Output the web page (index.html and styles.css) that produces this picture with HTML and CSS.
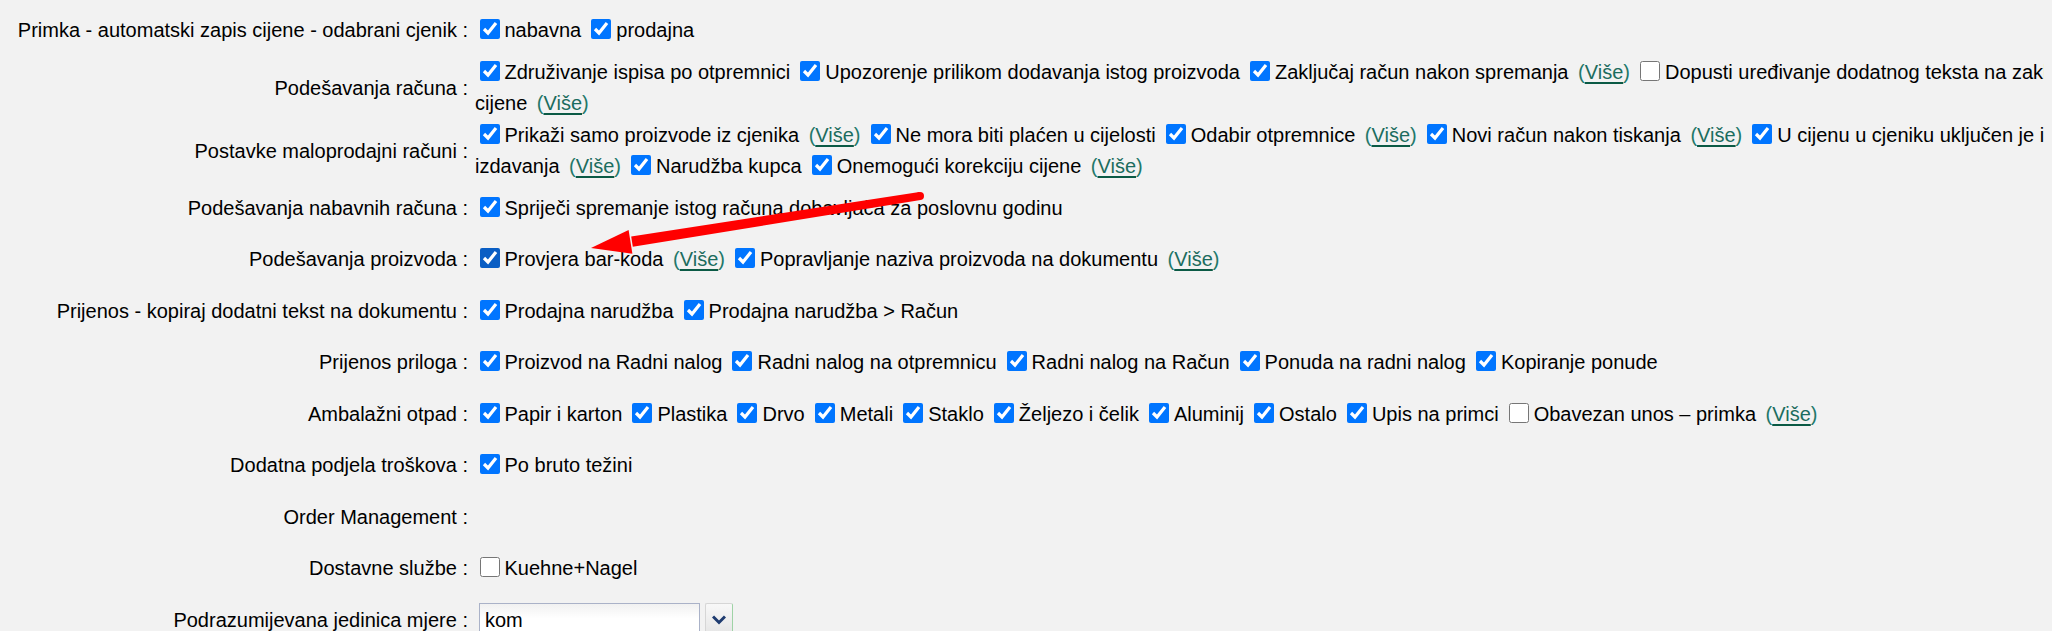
FILE: index.html
```html
<!DOCTYPE html>
<html lang="hr">
<head>
<meta charset="utf-8">
<title>Postavke</title>
<link rel="stylesheet" href="styles.css">
</head>
<body>
<table class="settings">
  <colgroup>
    <col class="c-lbl">
    <col class="c-val">
  </colgroup>
  <tr>
    <td class="lbl">Primka - automatski zapis cijene - odabrani cjenik :</td>
    <td class="val"><input type="checkbox" checked>nabavna <input type="checkbox" checked>prodajna</td>
  </tr>
  <tr>
    <td class="lbl">Podešavanja računa :</td>
    <td class="val"><input type="checkbox" checked>Združivanje ispisa po otpremnici <input type="checkbox" checked>Upozorenje prilikom dodavanja istog proizvoda <input type="checkbox" checked>Zaključaj račun nakon spremanja <span class="more">(<a href="#">Više</a>)</span> <input type="checkbox">Dopusti uređivanje dodatnog teksta na zaključanom računu <input type="checkbox">Upozorenje kod promjene<br>cijene <span class="more">(<a href="#">Više</a>)</span></td>
  </tr>
  <tr>
    <td class="lbl">Postavke maloprodajni računi :</td>
    <td class="val"><input type="checkbox" checked>Prikaži samo proizvode iz cjenika <span class="more">(<a href="#">Više</a>)</span> <input type="checkbox" checked>Ne mora biti plaćen u cijelosti <input type="checkbox" checked>Odabir otpremnice <span class="more">(<a href="#">Više</a>)</span> <input type="checkbox" checked>Novi račun nakon tiskanja <span class="more">(<a href="#">Više</a>)</span> <input type="checkbox" checked>U cijenu u cjeniku uključen je i porez na dan<br>izdavanja <span class="more">(<a href="#">Više</a>)</span> <input type="checkbox" checked>Narudžba kupca <input type="checkbox" checked>Onemogući korekciju cijene <span class="more">(<a href="#">Više</a>)</span></td>
  </tr>
  <tr>
    <td class="lbl">Podešavanja nabavnih računa :</td>
    <td class="val"><input type="checkbox" checked>Spriječi spremanje istog računa dobavljača za poslovnu godinu</td>
  </tr>
  <tr>
    <td class="lbl">Podešavanja proizvoda :</td>
    <td class="val"><input type="checkbox" class="cb-active" checked>Provjera bar-koda <span class="more">(<a href="#">Više</a>)</span> <input type="checkbox" checked>Popravljanje naziva proizvoda na dokumentu <span class="more">(<a href="#">Više</a>)</span></td>
  </tr>
  <tr>
    <td class="lbl">Prijenos - kopiraj dodatni tekst na dokumentu :</td>
    <td class="val"><input type="checkbox" checked>Prodajna narudžba <input type="checkbox" checked>Prodajna narudžba &gt; Račun</td>
  </tr>
  <tr>
    <td class="lbl">Prijenos priloga :</td>
    <td class="val"><input type="checkbox" checked>Proizvod na Radni nalog <input type="checkbox" checked>Radni nalog na otpremnicu <input type="checkbox" checked>Radni nalog na Račun <input type="checkbox" checked>Ponuda na radni nalog <input type="checkbox" checked>Kopiranje ponude</td>
  </tr>
  <tr>
    <td class="lbl">Ambalažni otpad :</td>
    <td class="val"><input type="checkbox" checked>Papir i karton <input type="checkbox" checked>Plastika <input type="checkbox" checked>Drvo <input type="checkbox" checked>Metali <input type="checkbox" checked>Staklo <input type="checkbox" checked>Željezo i čelik <input type="checkbox" checked>Aluminij <input type="checkbox" checked>Ostalo <input type="checkbox" checked>Upis na primci <input type="checkbox">Obavezan unos – primka <span class="more">(<a href="#">Više</a>)</span></td>
  </tr>
  <tr>
    <td class="lbl">Dodatna podjela troškova :</td>
    <td class="val"><input type="checkbox" checked>Po bruto težini</td>
  </tr>
  <tr>
    <td class="lbl">Order Management :</td>
    <td class="val"></td>
  </tr>
  <tr>
    <td class="lbl">Dostavne službe :</td>
    <td class="val"><input type="checkbox">Kuehne+Nagel</td>
  </tr>
  <tr>
    <td class="lbl">Podrazumijevana jedinica mjere :</td>
    <td class="val">
      <div class="combo">
        <span class="combo-field">kom</span>
        <span class="combo-btn"><svg width="14" height="10" viewBox="0 0 14 10"><path d="M1 1.5 L7 7.5 L13 1.5" fill="none" stroke="#1f3c70" stroke-width="3" stroke-linejoin="miter"/></svg></span>
      </div>
    </td>
  </tr>
</table>

<svg class="arrow" width="2052" height="631" viewBox="0 0 2052 631">
  <polygon points="920.6,200 919.4,192 631.2,236.6 632.8,246.8" fill="#ff0000"/>
  <circle cx="920" cy="196" r="4" fill="#ff0000"/>
  <polygon points="591,248 628.6,229.9 632.4,253.7" fill="#ff0000"/>
</svg>
</body>
</html>
```

FILE: styles.css
```css
html, body {
  overflow: hidden;
}

body {
  margin: 5px 8px 8px;
  background: #f2f2f2;
  color: #000;
  font-family: "Liberation Sans", Arial, sans-serif;
  font-size: 20px;
}

.settings {
  border-collapse: collapse;
  table-layout: fixed;
  width: 2700px;
}

.c-lbl {
  width: 463px;
}

.settings tr {
  height: 51.5px;
}

.lbl {
  padding: 0 3px 0 0;
  text-align: right;
  vertical-align: middle;
  white-space: nowrap;
}

.val {
  padding: 0.5px 0 0.5px 4px;
  line-height: 31px;
  vertical-align: middle;
  white-space: nowrap;
}

.val input[type="checkbox"] {
  width: 20px;
  height: 20px;
  margin: 0 5px 0 4.5px;
  vertical-align: -2px;
}

.val input.cb-active {
  accent-color: #0a5ec4;
}

.more {
  margin-left: 4px;
  color: #23786a;
}

.more a {
  color: #1c6c5e;
  text-decoration: underline;
  text-decoration-color: #0b5a45;
  text-decoration-thickness: 2px;
  text-underline-offset: 3px;
}

.combo {
  display: flex;
  align-items: stretch;
  height: 34px;
  margin-left: 4px;
}

.combo-field {
  box-sizing: border-box;
  width: 221px;
  padding: 0 5px;
  border: 1px solid #aab2c8;
  background: linear-gradient(#f1f1f1, #ffffff 45%);
  line-height: 32px;
}

.combo-btn {
  box-sizing: border-box;
  width: 28px;
  margin-left: 5px;
  display: flex;
  align-items: center;
  justify-content: center;
  border: 1px solid #d6d6d6;
  border-right-color: #9fd3a6;
  border-radius: 2px;
  background: linear-gradient(#f8f8f8, #e4e4e4);
}

.arrow {
  position: absolute;
  top: 0;
  left: 0;
  pointer-events: none;
}
```
